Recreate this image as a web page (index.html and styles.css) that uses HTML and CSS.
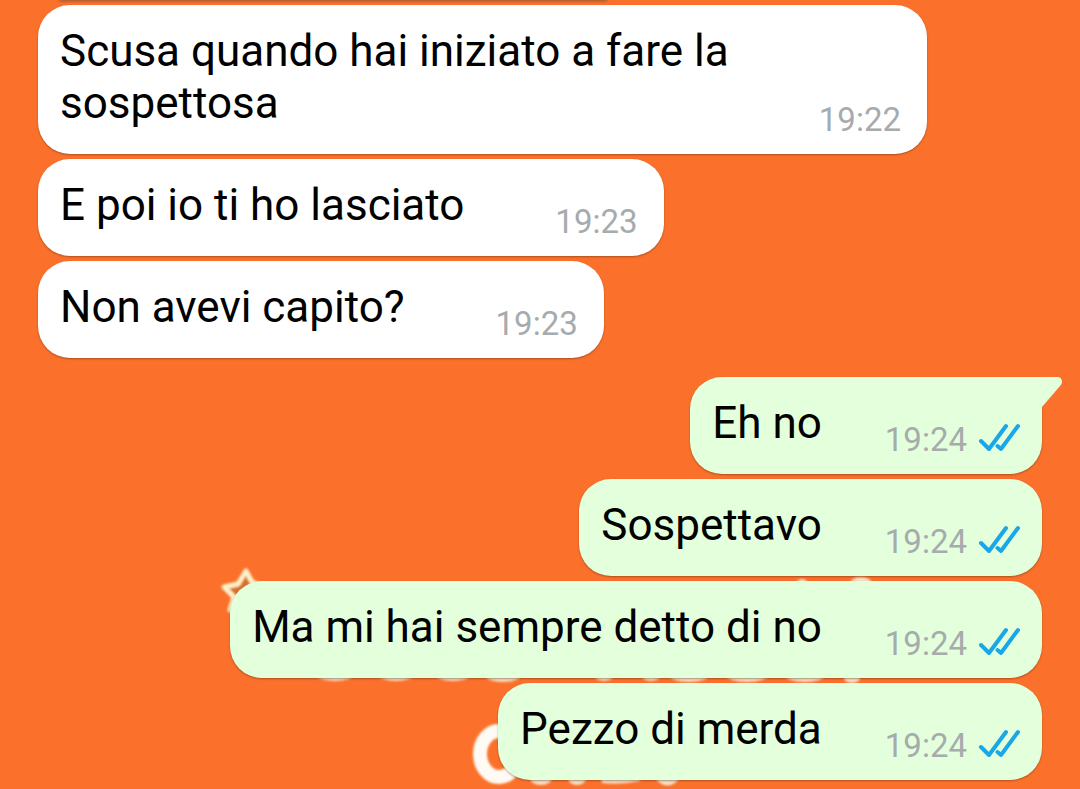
FILE: index.html
```html
<!DOCTYPE html>
<html lang="it">
<head>
<meta charset="utf-8">
<meta name="viewport" content="width=device-width, initial-scale=1">
<title>Chat</title>
<link rel="stylesheet" href="styles.css">
</head>
<body>
<svg class="wallpaper" width="1080" height="789" viewBox="0 0 1080 789" aria-hidden="true">
  <defs>
    <filter id="soft"><feGaussianBlur stdDeviation="1.2"/></filter>
  </defs>
  <rect x="58" y="-8" width="550" height="10" rx="4" fill="#b9602f" filter="url(#soft)"/>
  <g filter="url(#soft)">
    <path d="M224 587 238 584 246 571 252 582 266 587 255 598 257 612 243 606 230 610 234 597Z" fill="#d9702c" stroke="#fff0c8" stroke-width="5" stroke-linejoin="round"/>
    <g fill="#f6dfc4">
      <ellipse cx="335" cy="675" rx="18" ry="6"/>
      <ellipse cx="396" cy="675" rx="17" ry="6"/>
      <ellipse cx="453" cy="675" rx="17" ry="6"/>
      <ellipse cx="503" cy="675" rx="18" ry="7"/>
      <ellipse cx="604" cy="676" rx="9" ry="5"/>
      <ellipse cx="651" cy="676" rx="9" ry="5"/>
      <ellipse cx="689" cy="675" rx="20" ry="7"/>
      <ellipse cx="747" cy="675" rx="21" ry="7"/>
      <ellipse cx="805" cy="675" rx="20" ry="7"/>
      <ellipse cx="852" cy="678" rx="8" ry="5"/>
      <ellipse cx="861" cy="582" rx="10" ry="5"/>
      <ellipse cx="802" cy="583" rx="5" ry="4"/>
      <ellipse cx="541" cy="778" rx="11" ry="7"/>
      <ellipse cx="577" cy="778" rx="9" ry="7"/>
      <path d="M600 774h40v7q-20 4-38 2zM650 774h34l-9 9q-8 5-15 0z"/>
    </g>
    <ellipse cx="499" cy="754" rx="19" ry="23" fill="none" stroke="#fffaf4" stroke-width="14"/>
  </g>
</svg>

<main class="chat">
  <article class="bubble bubble-in bubble-long">
    <p class="text">Scusa quando hai iniziato a fare la sospettosa</p>
    <footer class="meta"><time datetime="19:22">19:22</time></footer>
  </article>
  <article class="bubble bubble-in">
    <p class="text">E poi io ti ho lasciato</p>
    <footer class="meta"><time datetime="19:23">19:23</time></footer>
  </article>
  <article class="bubble bubble-in">
    <p class="text">Non avevi capito?</p>
    <footer class="meta"><time datetime="19:23">19:23</time></footer>
  </article>
  <article class="bubble bubble-out bubble-first">
    <svg class="tail" width="24" height="32" viewBox="0 0 24 32" aria-hidden="true"><path d="M0 0H19Q24 0 24 5 24 7 22 9L4 30V32H0Z"/></svg>
    <p class="text">Eh no</p>
    <footer class="meta"><time datetime="19:24">19:24</time>
      <svg class="ticks" width="42" height="30" viewBox="-1 2 42 30" role="img" aria-label="Letto"><path d="M2 18 10 26 27 3M18.500 23 22 26 39 3"/></svg></footer>
  </article>
  <article class="bubble bubble-out">
    <p class="text">Sospettavo</p>
    <footer class="meta"><time datetime="19:24">19:24</time>
      <svg class="ticks" width="42" height="30" viewBox="-1 2 42 30" role="img" aria-label="Letto"><path d="M2 18 10 26 27 3M18.500 23 22 26 39 3"/></svg></footer>
  </article>
  <article class="bubble bubble-out">
    <p class="text">Ma mi hai sempre detto di no</p>
    <footer class="meta"><time datetime="19:24">19:24</time>
      <svg class="ticks" width="42" height="30" viewBox="-1 2 42 30" role="img" aria-label="Letto"><path d="M2 18 10 26 27 3M18.500 23 22 26 39 3"/></svg></footer>
  </article>
  <article class="bubble bubble-out">
    <p class="text">Pezzo di merda</p>
    <footer class="meta"><time datetime="19:24">19:24</time>
      <svg class="ticks" width="42" height="30" viewBox="-1 2 42 30" role="img" aria-label="Letto"><path d="M2 18 10 26 27 3M18.500 23 22 26 39 3"/></svg></footer>
  </article>
</main>
</body>
</html>
```
FILE: styles.css
```css
* {
  box-sizing: border-box;
}

body {
  position: relative;
  margin: 0;
  background: #fb712b;
  color: #000;
  font-family: Roboto, "Liberation Sans", sans-serif;
}

.wallpaper {
  position: absolute;
  top: 0;
  left: 0;
  z-index: -1;
  max-width: 100%;
}

.chat {
  display: flex;
  flex-direction: column;
  gap: 5px;
  padding: 5px 38px 9px;
}

.bubble {
  position: relative;
  display: flex;
  align-items: flex-end;
  justify-content: space-between;
  max-width: 889px;
  padding: 20px 22px 14px;
  border-radius: 32px;
  box-shadow: 0 1px 2px rgba(60, 30, 10, 0.4);
}

.bubble-in {
  align-self: flex-start;
  gap: 91px;
  padding-right: 26px;
  background: #fff;
}

.bubble-long {
  gap: 20px;
}

.bubble-out {
  align-self: flex-end;
  gap: 63px;
  background: #e4ffdb;
}

.bubble-first {
  margin-top: 14px;
  border-top-right-radius: 0;
}

.tail {
  position: absolute;
  top: 0;
  right: -20px;
  fill: #e4ffdb;
}

.text {
  margin: 0 0 11px;
  font-size: 44px;
  line-height: 52px;
}

.meta {
  display: flex;
  align-items: center;
  gap: 11px;
  color: #a6abad;
  font-size: 33px;
  line-height: 40px;
}

.ticks {
  overflow: visible;
  fill: none;
  stroke: #1aa7e8;
  stroke-width: 4;
  stroke-linecap: round;
  stroke-linejoin: round;
}
```
